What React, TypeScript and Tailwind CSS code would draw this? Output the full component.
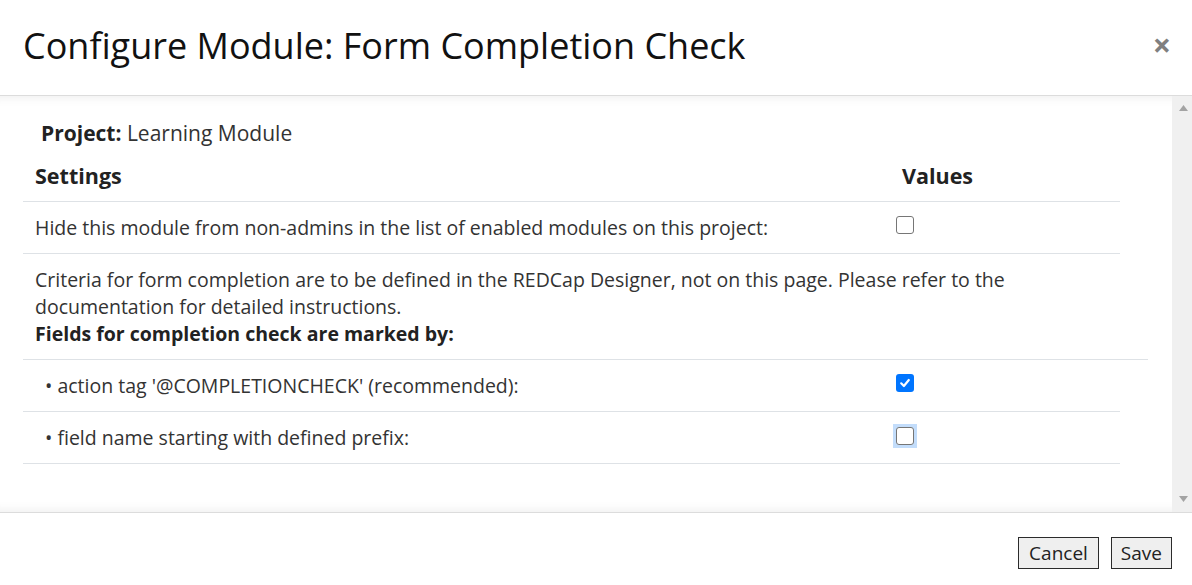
import React from 'react';

function Checkbox({ checked, focused }: { checked?: boolean; focused?: boolean }) {
  if (checked) {
    return (
      <span className="flex h-[18px] w-[18px] items-center justify-center rounded-[3px] bg-[#0075ff]">
        <svg viewBox="0 0 12 12" className="h-[12px] w-[12px]">
          <path d="M2.2 6.3 L4.9 9 L9.8 3" fill="none" stroke="#fff" strokeWidth="2.2" strokeLinecap="round" strokeLinejoin="round" />
        </svg>
      </span>
    );
  }
  return (
    <span className={`flex items-center justify-center ${focused ? 'bg-[#c3ddfb] p-[3px] -m-[3px]' : ''}`}>
      <span className="block h-[18px] w-[18px] rounded-[3px] border-[1.5px] border-[#767676] bg-white" />
    </span>
  );
}

export default function App() {
  return (
    <div className="flex h-[585px] w-[1192px] flex-col overflow-hidden bg-white font-['Open_Sans',sans-serif] text-[19.5px] leading-[27px] text-[#333]">
      {/* Header */}
      <div className="flex h-[96px] shrink-0 items-center justify-between border-b border-[#dcdcdc] pl-[23px] pr-[21px]">
        <h1 className="text-[36px] leading-[44px] text-[#111] pb-[4px]">Configure Module: Form Completion Check</h1>
        <button className="pb-[6px] text-[32px] font-bold leading-none text-[#808080]">×</button>
      </div>

      {/* Body */}
      <div className="flex min-h-0 flex-1 shadow-[inset_0_12px_12px_-12px_rgba(0,0,0,0.09),inset_0_-12px_12px_-12px_rgba(0,0,0,0.09)]">
        <div className="flex-1 pl-[23px] pt-[23px]">
          <p className="pl-[18px] text-[21px] leading-[28px]">
            <span className="font-bold text-[#222]">Project:</span> Learning Module
          </p>
          <div className="mt-[3px] w-[1097px]">
            <div className="flex border-b border-[#dee2e6] pb-[12px] pt-[13px] text-[21.5px] leading-[26px] font-bold text-[#222]">
              <div className="w-[867px] pl-[12px]">Settings</div>
              <div className="pl-[12px]">Values</div>
            </div>
            <div className="flex border-b border-[#dee2e6] py-[12px]">
              <div className="w-[867px] pl-[12px]">
                Hide this module from non-admins in the list of enabled modules on this project:
              </div>
              <div className="flex items-center pl-[6px] pb-[5px]">
                <Checkbox />
              </div>
            </div>
            <div className="w-[1125px] border-b border-[#dee2e6] py-[12px] pl-[12px] pr-[100px]">
              Criteria for form completion are to be defined in the REDCap Designer, not on this page. Please refer to the documentation for detailed instructions.
              <br />
              <span className="font-bold text-[#222]">Fields for completion check are marked by:</span>
            </div>
            <div className="flex border-b border-[#dee2e6] py-[12px]">
              <div className="w-[867px] pl-[22px]">• action tag '@COMPLETIONCHECK' (recommended):</div>
              <div className="flex items-center pl-[6px] pb-[5px]">
                <Checkbox checked />
              </div>
            </div>
            <div className="flex border-b border-[#dee2e6] py-[12px]">
              <div className="w-[867px] pl-[22px]">• field name starting with defined prefix:</div>
              <div className="flex items-center pl-[6px] pb-[3px]">
                <Checkbox focused />
              </div>
            </div>
          </div>
        </div>
        {/* Scrollbar */}
        <div className="flex w-[20px] shrink-0 flex-col items-center justify-between bg-[#f0f0f0] pb-[10px] pl-[2px] pt-[9px]">
          <svg viewBox="0 0 9 6" className="h-[6px] w-[9px]">
            <path d="M0 6 L4.5 0 L9 6 Z" fill="#a3a3a3" />
          </svg>
          <svg viewBox="0 0 9 6" className="h-[6px] w-[9px]">
            <path d="M0 0 L4.5 6 L9 0 Z" fill="#a3a3a3" />
          </svg>
        </div>
      </div>

      {/* Footer */}
      <div className="flex h-[73px] shrink-0 items-start justify-end gap-[12px] border-t border-[#dcdcdc] pr-[20px] pt-[24px]">
        <button className="flex h-[32px] items-center border border-[#2b2b2b] bg-[#efefef] px-[10px] text-[19px] text-[#222]">Cancel</button>
        <button className="flex h-[32px] items-center border border-[#2b2b2b] bg-[#efefef] px-[9px] text-[19px] text-[#222]">Save</button>
      </div>
    </div>
  );
}
